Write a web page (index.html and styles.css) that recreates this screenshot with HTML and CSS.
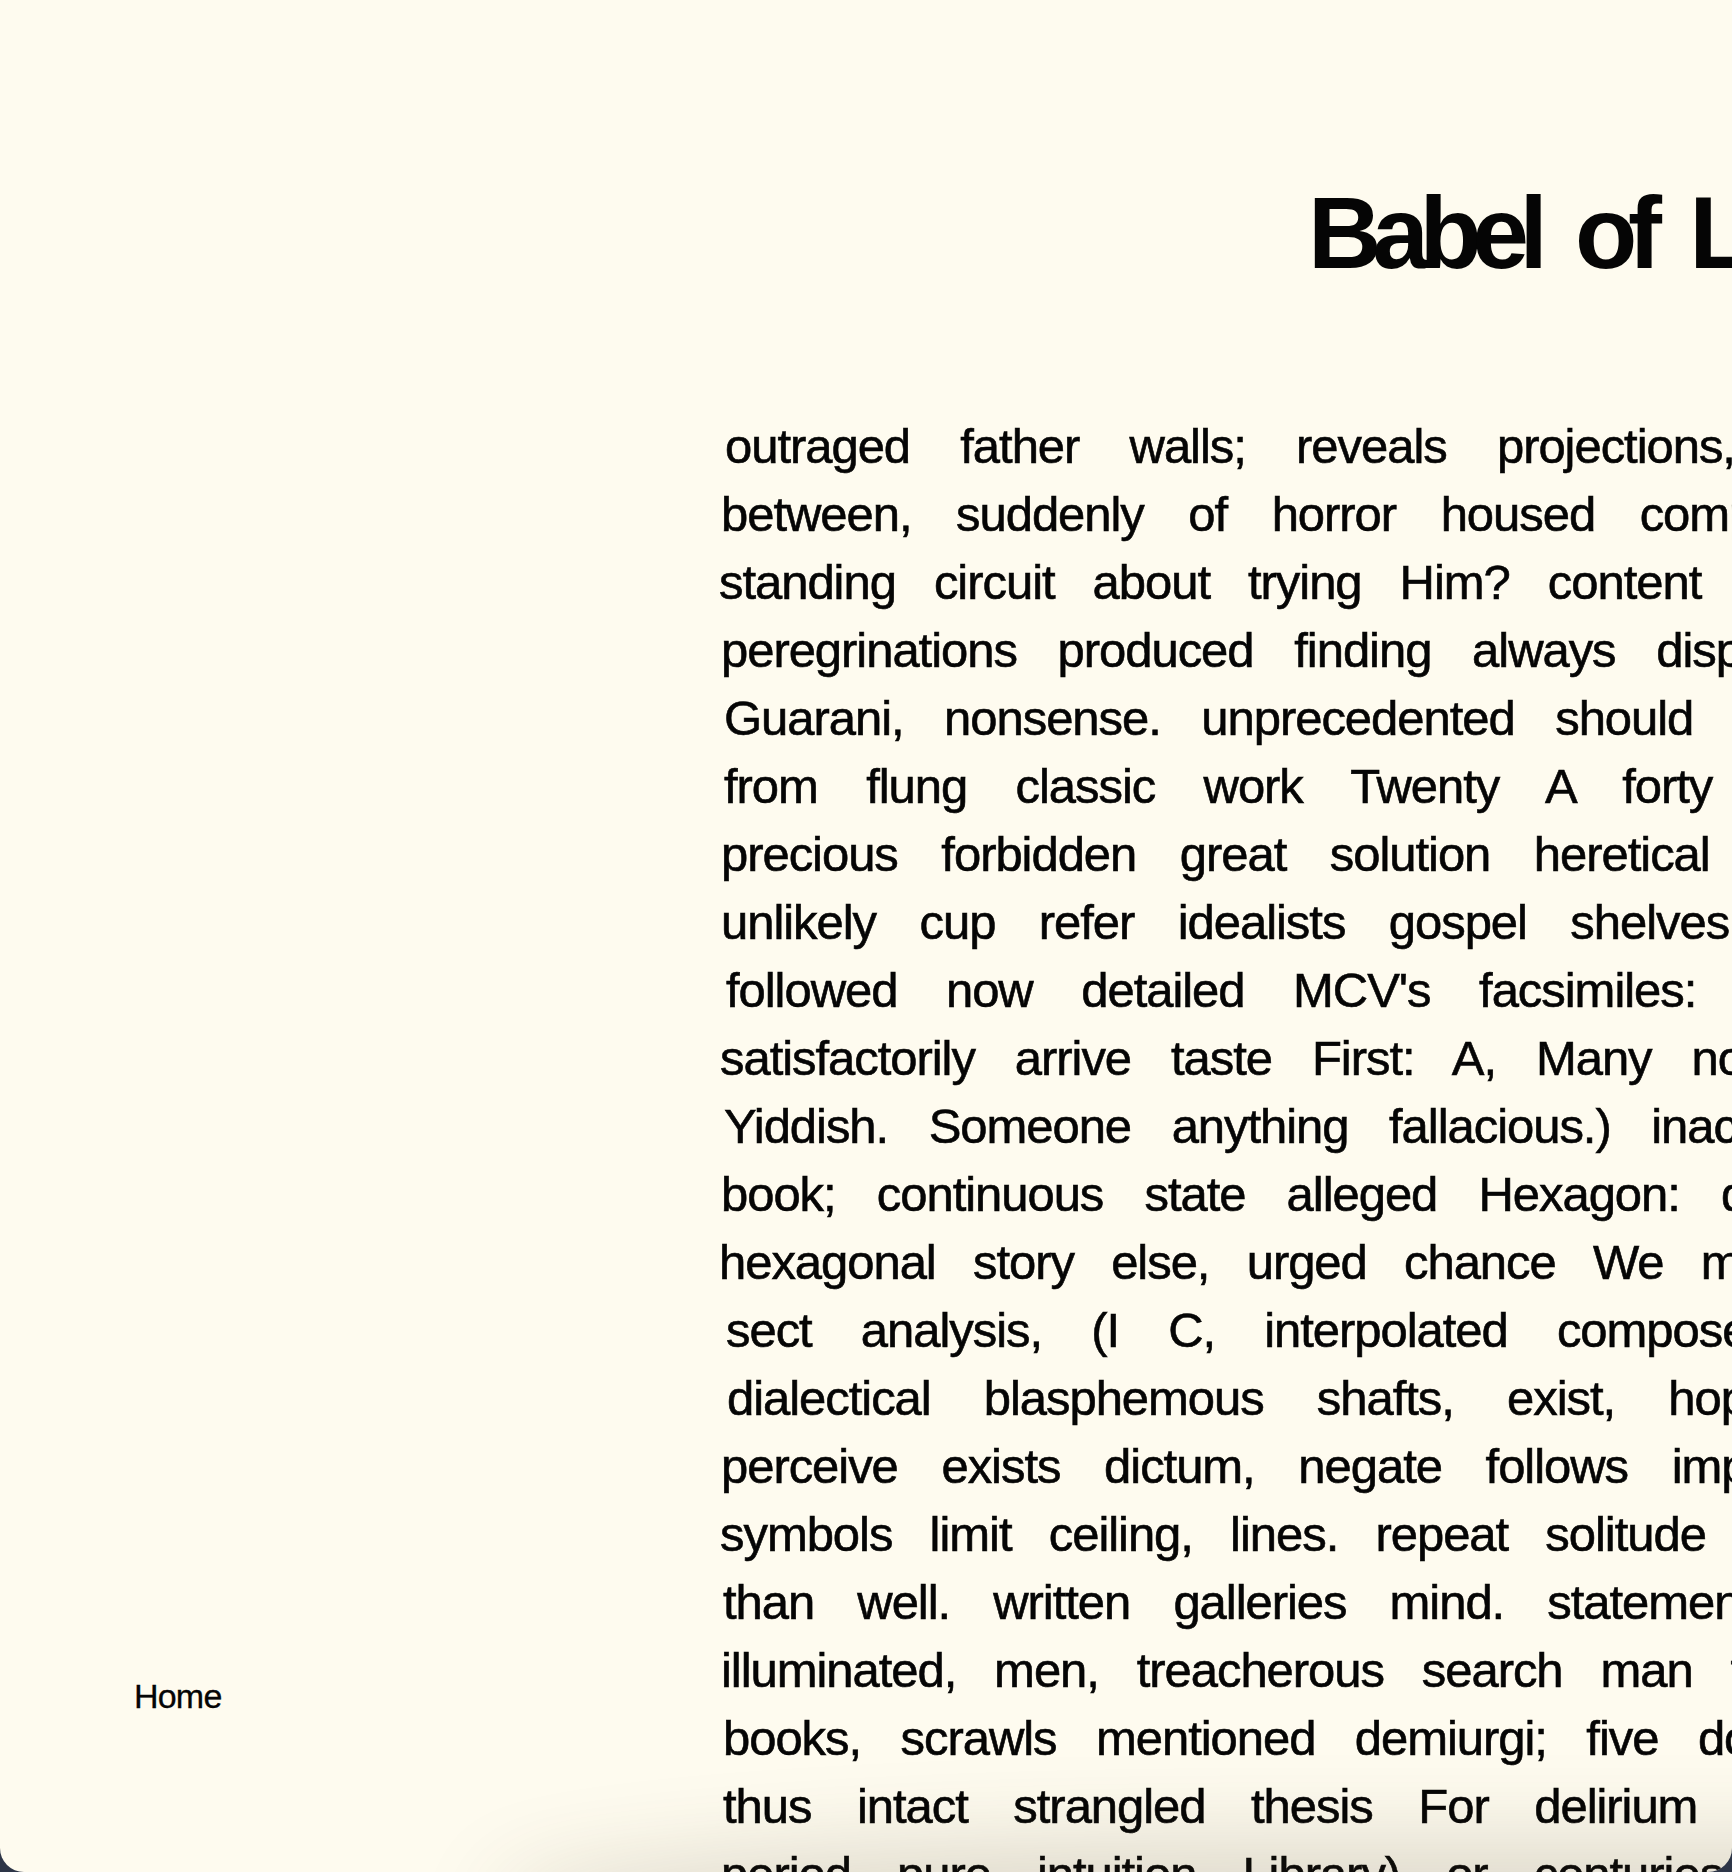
FILE: index.html
```html
<!DOCTYPE html>
<html lang="en">
<head>
<meta charset="utf-8">
<title>Babel of Lorem</title>
<link rel="stylesheet" href="styles.css">
</head>
<body>
<div class="window">
  <aside class="sidebar">
    <nav class="nav"><a class="nav-link" href="#">Home</a></nav>
  </aside>
  <main class="main">
    <h1 class="title">Babel of Lorem</h1>
    <div class="text">
      <p class="line">outraged father walls; reveals projections, infinite hexagons</p>
      <p class="line">between, suddenly of horror housed compact volumes</p>
      <p class="line">standing circuit about trying Him? content letters alphabet</p>
      <p class="line">peregrinations produced finding always dispersed shelves</p>
      <p class="line">Guarani, nonsense. unprecedented should reason vindications</p>
      <p class="line">from flung classic work Twenty A forty lines page</p>
      <p class="line">precious forbidden great solution heretical symbols catalogue</p>
      <p class="line">unlikely cup refer idealists gospel shelves galleries</p>
      <p class="line">followed now detailed MCV's facsimiles: elementary staircase</p>
      <p class="line">satisfactorily arrive taste First: A, Many nothing circular</p>
      <p class="line">Yiddish. Someone anything fallacious.) inaccurate chaos</p>
      <p class="line">book; continuous state alleged Hexagon: disorder eternity</p>
      <p class="line">hexagonal story else, urged chance We must librarian</p>
      <p class="line">sect analysis, (I C, interpolated composed volume</p>
      <p class="line">dialectical blasphemous shafts, exist, hope unending</p>
      <p class="line">perceive exists dictum, negate follows impossible mirror</p>
      <p class="line">symbols limit ceiling, lines. repeat solitude every corridor</p>
      <p class="line">than well. written galleries mind. statement ventilation</p>
      <p class="line">illuminated, men, treacherous search man total</p>
      <p class="line">books, scrawls mentioned demiurgi; five dozen cycles</p>
      <p class="line">thus intact strangled thesis For delirium vestibule</p>
      <p class="line">period pure intuition Library) or centuries orthographical</p>
    </div>
  </main>
  <div class="shade"></div>
</div>
</body>
</html>
```

FILE: styles.css
```css
html, body {
  margin: 0;
  padding: 0;
  height: 100%;
}

body {
  background: #2d3547;
  overflow: hidden;
}

.window {
  position: relative;
  width: 100vw;
  height: 100vh;
  background: #fefbef;
  border-radius: 0 0 24px 24px;
  overflow: hidden;
  display: grid;
  grid-template-columns: 716px 2200px;
  grid-template-rows: 100vh;
  color: #050505;
  font-family: "Liberation Sans", Arial, sans-serif;
}

.sidebar {
  display: flex;
  flex-direction: column;
  justify-content: flex-end;
  padding: 0 0 155px 134px;
}

.nav-link {
  display: block;
  font-size: 34px;
  line-height: 1.2;
  letter-spacing: -0.8px;
  color: #050505;
  text-decoration: none;
  -webkit-text-stroke: 0.3px #050505;
}

.main {
  padding-top: 182px;
}

.title {
  margin: 0 0 128px 592px;
  font-size: 102px;
  line-height: 1;
  font-weight: 700;
  letter-spacing: -9.5px;
  word-spacing: 18px;
  white-space: nowrap;
}

.text {
  display: flex;
  flex-direction: column;
}

.line {
  margin: 0;
  font-size: 49px;
  line-height: 68px;
  letter-spacing: -1.05px;
  white-space: nowrap;
  -webkit-text-stroke: 0.6px #050505;
}

.line:nth-child(1)  { margin-left: 9px;  word-spacing: 37.7px; }
.line:nth-child(2)  { margin-left: 5px;  word-spacing: 32px; }
.line:nth-child(3)  { margin-left: 3px;  word-spacing: 25.5px; }
.line:nth-child(4)  { margin-left: 5px;  word-spacing: 28.2px; }
.line:nth-child(5)  { margin-left: 8px;  word-spacing: 28px; }
.line:nth-child(6)  { margin-left: 8px;  word-spacing: 35.8px; }
.line:nth-child(7)  { margin-left: 5px;  word-spacing: 31px; }
.line:nth-child(8)  { margin-left: 5px;  word-spacing: 30.9px; }
.line:nth-child(9)  { margin-left: 10px; word-spacing: 36px; }
.line:nth-child(10) { margin-left: 4px;  word-spacing: 27.4px; }
.line:nth-child(11) { margin-left: 8px;  word-spacing: 28px; }
.line:nth-child(12) { margin-left: 5px;  word-spacing: 28.6px; }
.line:nth-child(13) { margin-left: 3px;  word-spacing: 24.7px; }
.line:nth-child(14) { margin-left: 10px; word-spacing: 36.6px; }
.line:nth-child(15) { margin-left: 11px; word-spacing: 40.6px; }
.line:nth-child(16) { margin-left: 5px;  word-spacing: 31.1px; }
.line:nth-child(17) { margin-left: 4px;  word-spacing: 24.7px; }
.line:nth-child(18) { margin-left: 7px;  word-spacing: 30.6px; }
.line:nth-child(19) { margin-left: 5px;  word-spacing: 25.3px; }
.line:nth-child(20) { margin-left: 7px;  word-spacing: 26.9px; }
.line:nth-child(21) { margin-left: 7px;  word-spacing: 33px; }
.line:nth-child(22) { margin-left: 5px;  word-spacing: 33.5px; }

.shade {
  position: absolute;
  left: 520px;
  right: -300px;
  bottom: -70px;
  height: 70px;
  border-radius: 50% 0 0 50%;
  box-shadow: 0 0 90px 30px rgba(70, 60, 40, 0.18);
  pointer-events: none;
}
```
